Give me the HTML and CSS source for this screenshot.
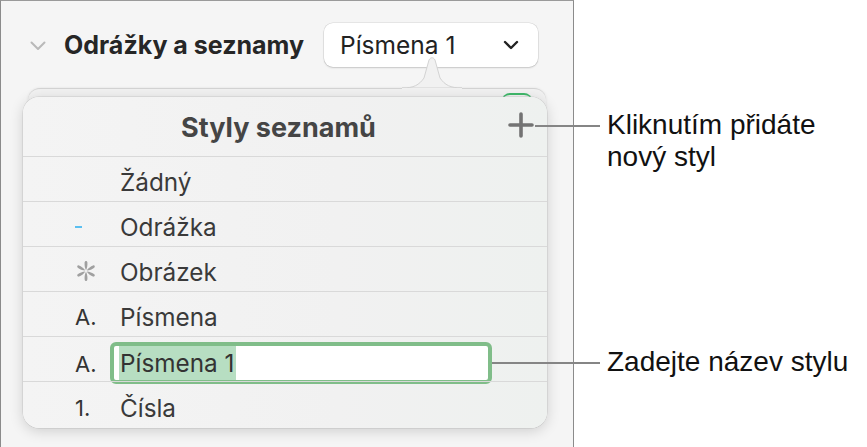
FILE: index.html
```html
<!DOCTYPE html>
<html lang="cs">
<head>
<meta charset="utf-8">
<title>Styly seznamů</title>
<link rel="stylesheet" href="styles.css">
</head>
<body>
<div class="page">
  <div class="panel">
    <div class="section-head">
      <svg class="disclosure" width="16" height="10" viewBox="0 0 16 10"><path d="M1.5 1.5 L8 8 L14.5 1.5" fill="none" stroke="#b9b9b9" stroke-width="2" stroke-linecap="round" stroke-linejoin="round"/></svg>
      <span class="section-title">Odrážky a seznamy</span>
      <div class="dropdown">
        <span class="dropdown-label">Písmena 1</span>
        <svg width="16" height="10" viewBox="0 0 16 10"><path d="M2 2 L8 8 L14 2" fill="none" stroke="#222" stroke-width="2.4" stroke-linecap="round" stroke-linejoin="round"/></svg>
      </div>
    </div>

    <div class="back-card">
      <div class="toggle"></div>
    </div>
    <svg class="arrow" width="60" height="32" viewBox="0 0 60 32"><path d="M0 31 C12 31 17 28 22 21 L27 3 C28.5 0 31.5 0 33 3 L38 21 C43 28 48 31 60 31 Z" fill="#f1f1f1" stroke="#d3d3d3" stroke-width="1"/><rect x="0" y="31" width="60" height="1" fill="#f1f1f1"/></svg>

    <div class="popover">
      <div class="pop-head">
        <span></span>
        <span class="pop-title">Styly seznamů</span>
        <svg class="plus" width="26" height="26" viewBox="0 0 26 26"><path d="M13 2 V24 M2 13 H24" stroke="#737373" stroke-width="3.6" stroke-linecap="round"/></svg>
      </div>
      <div class="row"><span class="bullet"></span><span class="label">Žádný</span></div>
      <div class="row"><span class="bullet"><span class="dash"></span></span><span class="label">Odrážka</span></div>
      <div class="row"><span class="bullet">
        <svg width="24" height="24" viewBox="0 0 24 24" class="star"><g fill="#a0a0a0"><path id="petal" d="M12 11.2 C10.6 8.5 10.4 5.5 10.7 3.2 C11 1.6 13 1.6 13.3 3.2 C13.6 5.5 13.4 8.5 12 11.2 Z"/><use href="#petal" transform="rotate(60 12 12)"/><use href="#petal" transform="rotate(120 12 12)"/><use href="#petal" transform="rotate(180 12 12)"/><use href="#petal" transform="rotate(240 12 12)"/><use href="#petal" transform="rotate(300 12 12)"/></g></svg>
      </span><span class="label">Obrázek</span></div>
      <div class="row"><span class="bullet">A.</span><span class="label">Písmena</span></div>
      <div class="row editing"><span class="bullet">A.</span><span class="field"><span class="sel">Písmena 1</span></span></div>
      <div class="row last"><span class="bullet">1.</span><span class="label">Čísla</span></div>
    </div>
  </div>

  <div class="callout c1">
    <span class="leader"></span>
    <span class="callout-text">Kliknutím přidáte<br>nový styl</span>
  </div>
  <div class="callout c2">
    <span class="leader"></span>
    <span class="callout-text">Zadejte název stylu</span>
  </div>
</div>
</body>
</html>
```

FILE: styles.css
```css
* { box-sizing: border-box; }
html, body { margin: 0; padding: 0; background: #fff; }
body { font-family: Inter, "Noto Sans", "Liberation Sans", sans-serif; }

.page {
  position: relative;
  width: 867px;
  height: 447px;
  display: flex;
  overflow: hidden;
}

.panel {
  position: relative;
  width: 574px;
  height: 447px;
  background: #f5f5f5;
  border: 1px solid #8b8b8b;
  border-bottom: none;
  border-top-color: #9a9a9a;
}

.section-head {
  display: flex;
  align-items: center;
  padding: 22px 35px 0 29px;
  height: 66px;
}
.disclosure { flex: none; margin-top: 2px; }
.section-title {
  margin-left: 18px;
  font-size: 25px;
  font-weight: 700;
  color: #262626;
}
.dropdown {
  margin-left: auto;
  width: 214px;
  height: 44px;
  background: #fff;
  border-radius: 9px;
  box-shadow: 0 0 0 0.5px rgba(0,0,0,0.12), 0 1px 2px rgba(0,0,0,0.14);
  display: flex;
  align-items: center;
  justify-content: space-between;
  padding: 0 19px 0 16px;
}
.dropdown-label { font-size: 24.5px; color: #222; }

.back-card {
  position: absolute;
  left: 27px;
  top: 87px;
  width: 518px;
  height: 60px;
  border-radius: 12px;
  background: #f1f1f1;
  border-top: 1px solid #d3d3d3;
  box-shadow: 0 0 3px rgba(0,0,0,0.08);
}
.toggle {
  position: absolute;
  left: 474px;
  top: 4px;
  width: 30px;
  height: 16px;
  border-radius: 8px;
  border-top: 2px solid #3fb86a;
}
.arrow {
  position: absolute;
  left: 401px;
  top: 56px;
}

.popover {
  position: absolute;
  left: 22px;
  top: 96px;
  width: 524px;
  height: 331px;
  border-radius: 16px;
  background: linear-gradient(90deg, #f4f4f4 0%, #f1f1f1 60%, #eef1ef 100%);
  box-shadow: 0 3px 14px rgba(0,0,0,0.16), 0 0 0 0.5px rgba(0,0,0,0.12);
  display: flex;
  flex-direction: column;
  overflow: hidden;
}
.pop-head {
  height: 59px;
  flex: none;
  display: grid;
  grid-template-columns: 1fr auto 1fr;
  align-items: center;
  padding: 0 13px 0 0;
}
.pop-title {
  font-size: 27px;
  font-weight: 700;
  color: #454545;
  padding-top: 2px;
}
.plus { justify-self: end; margin-top: -3px; }

.row {
  flex: none;
  height: 45px;
  border-top: 1.5px solid #d9d9d9;
  display: grid;
  grid-template-columns: 97px 1fr;
  align-items: center;
  font-size: 24.3px;
  color: #3a3a3a;
}
.row.last { height: 47px; }
.label { padding-top: 6px; }
.bullet {
  padding-left: 52px;
  display: flex;
  align-items: center;
  padding-top: 6px;
  color: #333;
  font-size: 22px;
}
.dash {
  display: block;
  width: 7px;
  height: 2px;
  background: #5bbff0;
}
.star { margin-top: -2px; margin-left: -1px; }

.row.editing { grid-template-columns: 87px 1fr; }
.field {
  width: 382px;
  height: 42px;
  margin-top: 5px;
  background: #fff;
  border: 4.5px solid #80bd89;
  border-radius: 6px;
  display: flex;
  align-items: center;
  padding-left: 5px;
  color: #333;
}
.sel {
  background: #b7dec2;
  padding: 3px 2px 2px 1px;
  line-height: 1.2;
}

.callout {
  position: absolute;
  display: flex;
  align-items: flex-start;
}
.leader {
  display: block;
  height: 2px;
  background: #858585;
  flex: none;
}
.callout-text {
  font-family: "Liberation Sans", Arial, sans-serif;
  font-size: 28px;
  line-height: 32px;
  color: #111;
  margin-left: 7px;
}
.c1 { left: 535px; top: 109px; }
.c1 .leader { width: 65px; margin-top: 16px; }
.c2 { left: 492px; top: 346px; }
.c2 .leader { width: 108px; margin-top: 16px; }
```
